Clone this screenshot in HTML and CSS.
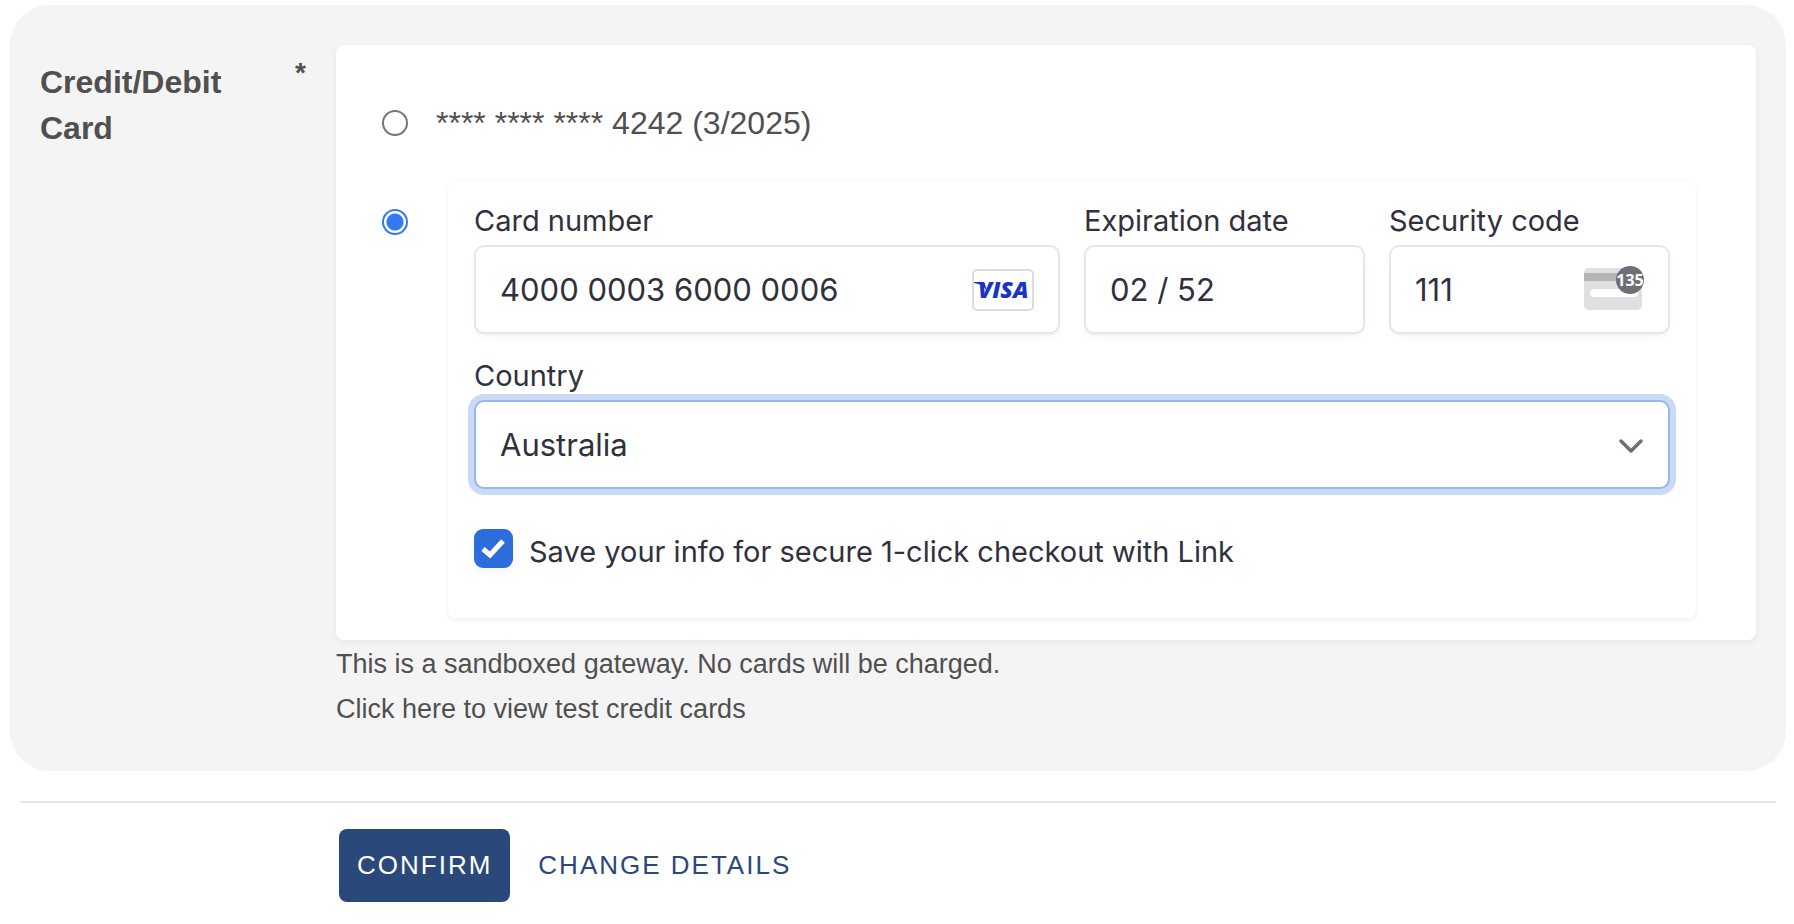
FILE: index.html
```html
<!DOCTYPE html>
<html lang="en">
<head>
<meta charset="utf-8">
<title>Payment details</title>
<link rel="stylesheet" href="styles.css">
</head>
<body>
<form class="page">
  <section class="panel">
    <div class="panel-label">
      <span class="panel-title">Credit/Debit Card</span>
      <span class="required">*</span>
    </div>
    <div class="panel-body">
      <div class="methods">
        <div class="saved">
          <input class="radio" type="radio" name="method" id="saved-card">
          <label class="saved-label" for="saved-card">**** **** **** 4242 (3/2025)</label>
        </div>
        <div class="new">
          <input class="radio" type="radio" name="method" id="new-card" aria-label="New card" checked>
          <div class="card-form">
            <div class="fields">
              <div class="field field-half">
                <label for="number">Card number</label>
                <div class="control">
                  <input class="box" id="number" type="text" value="4000 0003 6000 0006">
                  <svg class="brand" width="62" height="42" viewBox="0 0 62 42" role="img" aria-label="Visa">
                    <rect x="1" y="1" width="60" height="40" rx="4" fill="#fff" stroke="#ddd" stroke-width="2"/>
                    <path d="M2 13h8c2 0 3 1 3 2l2 7C12 17 8 15 2 14z" fill="#1a34c8"/>
                    <text class="brand-text" x="6" y="29">VISA</text>
                  </svg>
                </div>
              </div>
              <div class="field">
                <label for="expiry">Expiration date</label>
                <div class="control">
                  <input class="box" id="expiry" type="text" value="02 / 52">
                </div>
              </div>
              <div class="field">
                <label for="code">Security code</label>
                <div class="control">
                  <input class="box" id="code" type="text" value="111">
                  <svg class="cvc" width="60" height="44" viewBox="0 0 60 44" aria-hidden="true">
                    <rect x="0" y="2" width="58" height="42" rx="5" fill="#e0e0e3"/>
                    <path d="M0 7h58v8H0z" fill="#b3b3b8"/>
                    <rect x="6" y="23" width="48" height="8" rx="4" fill="#fff"/>
                    <circle cx="46" cy="14" r="14" fill="#6d6e78"/>
                    <text class="cvc-text" x="46" y="20">135</text>
                  </svg>
                </div>
              </div>
              <div class="field field-full">
                <label for="country">Country</label>
                <div class="control">
                  <select class="box box-focus" id="country"><option>Australia</option></select>
                  <svg class="chevron" width="26" height="16" viewBox="0 0 26 16" aria-hidden="true">
                    <path d="M3 3l10 10L23 3" fill="none" stroke="#6d6e78" stroke-width="3.500" stroke-linecap="round" stroke-linejoin="round"/>
                  </svg>
                </div>
              </div>
            </div>
            <div class="save">
              <div class="tick">
                <input class="checkbox" type="checkbox" id="save" checked>
                <svg class="tick-mark" width="24" height="20" viewBox="0 0 24 20" aria-hidden="true">
                  <path d="M2 10l7 6L22 2" fill="none" stroke="#fff" stroke-width="5"/>
                </svg>
              </div>
              <label for="save">Save your info for secure 1-click checkout with Link</label>
            </div>
          </div>
        </div>
      </div>
      <div class="help">
        <p class="help-line">This is a sandboxed gateway. No cards will be charged.</p>
        <p class="help-line"><a class="help-link" href="#">Click here to view test credit cards</a></p>
      </div>
    </div>
  </section>
  <hr class="rule">
  <div class="actions">
    <button class="btn btn-primary" type="submit">CONFIRM</button>
    <button class="btn btn-plain" type="button">CHANGE DETAILS</button>
  </div>
</form>
</body>
</html>
```
FILE: styles.css
```css
* { box-sizing: border-box; }

body {
  margin: 0;
  background: #fff;
  color: #505050;
  font-family: "Liberation Sans", Arial, sans-serif;
}

.page { padding: 5px 8px 20px 10px; }

.panel {
  display: grid;
  grid-template-columns: 296px 1fr;
  padding: 40px 30px 39px;
  border-radius: 40px;
  background: #f4f4f4;
}

.panel-label {
  display: flex;
  justify-content: space-between;
  align-items: flex-start;
  padding: 14px 30px 0 0;
  font-weight: bold;
}

.panel-title { width: 200px; font-size: 32px; line-height: 46px; }
.required { font-size: 28px; line-height: 28px; }

.methods {
  padding: 48px 60px 22px 46px;
  border-radius: 8px;
  background: #fff;
  box-shadow: 0 2px 6px #32466e14;
}

.saved, .new { display: flex; align-items: flex-start; }
.saved { align-items: center; gap: 28px; height: 60px; }
.saved-label { font-size: 32px; }
.new { gap: 40px; margin-top: 28px; }
.new .radio { margin-top: 28px; }

.radio {
  appearance: none;
  flex: none;
  width: 26px;
  height: 26px;
  margin: 0;
  border: 2px solid #767676;
  border-radius: 50%;
  background: #fff;
}

.radio:checked {
  border-color: #3478f6;
  background: radial-gradient(circle, #3478f6 8px, #fff 9px);
}

.card-form {
  flex: 1;
  padding: 22px 26px 43px;
  border-radius: 8px;
  background: #fff;
  color: #30313d;
  font-family: Inter, sans-serif;
  font-size: 29px;
  box-shadow: 0 2px 6px #32466e14;
}

.fields {
  display: grid;
  grid-template-columns: repeat(4, 1fr);
  gap: 24px;
}

.field { min-width: 0; }
.field-half { grid-column: span 2; }
.field-full { grid-column: span 4; }
.field label { display: block; height: 42px; line-height: 36px; white-space: nowrap; }

.control { position: relative; }

.box {
  appearance: none;
  display: block;
  width: 100%;
  height: 89px;
  padding: 0 24px;
  border: 2px solid #e6e6e6;
  border-radius: 10px;
  outline: 0;
  background: #fff;
  color: #30313d;
  font-family: Inter, sans-serif;
  font-size: 31px;
  box-shadow: 0 2px 2px #00000008, 0 6px 12px #00000005;
}

.box-focus {
  border-color: #98b7ec;
  box-shadow: 0 0 0 6px #cbdaf4, 0 2px 2px #00000008;
}

.brand, .cvc, .chevron { position: absolute; right: 26px; pointer-events: none; }
.brand { top: 24px; }
.cvc { top: 21px; }
.chevron { top: 38px; }

.brand-text { fill: #1a34c8; font: italic 800 23px "Open Sans", sans-serif; }
.cvc-text { fill: #fff; font: bold 16px "Noto Sans", sans-serif; text-anchor: middle; }

.save { display: flex; align-items: flex-start; gap: 16px; margin-top: 40px; }
.save label { line-height: 46px; white-space: nowrap; }

.tick { position: relative; }

.checkbox {
  appearance: none;
  display: block;
  width: 39px;
  height: 39px;
  margin: 0;
  border-radius: 9px;
  background: #2d6cdb;
  box-shadow: 0 4px 8px #0000000a;
}

.tick-mark { position: absolute; top: 10px; left: 7px; pointer-events: none; }

.help { padding-top: 2px; font-size: 27px; line-height: 45px; }
.help-line { margin: 0; }
.help-link { color: inherit; text-decoration: none; }

.rule { height: 2px; margin: 30px 10px 26px; border: 0; background: #e5e5e5; }

.actions { display: flex; gap: 8px; padding-left: 329px; }

.btn {
  height: 73px;
  border: 0;
  border-radius: 8px;
  font-family: inherit;
  font-size: 26px;
  letter-spacing: 2px;
}

.btn-primary { padding: 0 18px; background: #2a4879; color: #fff; }
.btn-plain { padding: 0 20px; background: none; color: #2a4879; }
```
